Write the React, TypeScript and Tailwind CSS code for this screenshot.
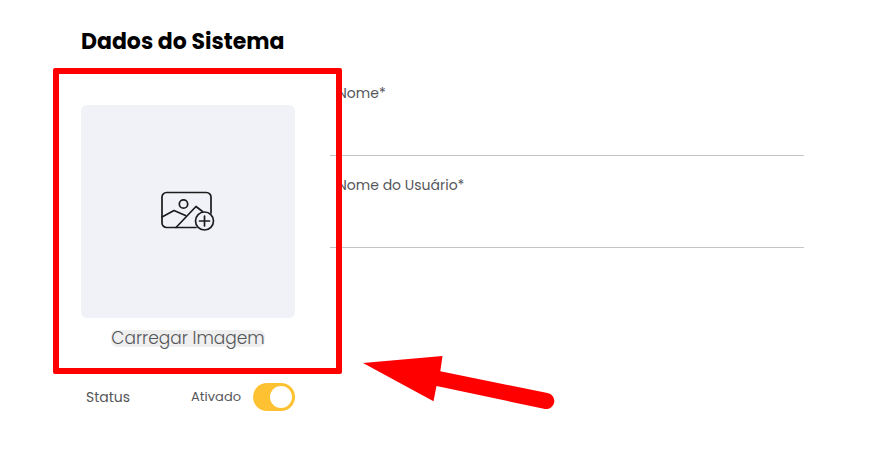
import React, { useState } from 'react';

const fields = [
  { id: 'nome', label: 'Nome*' },
  { id: 'usuario', label: 'Nome do Usuário*' },
];

const ImagePlusIcon: React.FC = () => (
  <svg
    width="54"
    height="41"
    viewBox="0 0 54 41"
    fill="none"
    stroke="#1c1c1e"
    strokeWidth="1.7"
    strokeLinecap="round"
    strokeLinejoin="round"
    aria-hidden="true"
  >
    <path d="M35 36.500H5.500a4.500 4.500 0 0 1-4.500-4.500V6a4.500 4.500 0 0 1 4.500-4.500h40A4.500 4.500 0 0 1 50 6v16" />
    <circle cx="22.500" cy="13" r="4.200" />
    <path d="M1 26l12-6.500 11.500 5" />
    <path d="M15 36.500L35 15.500l6.500 5" />
    <circle cx="43.500" cy="30" r="9" />
    <path d="M43.500 25v10M38.500 30h10" />
  </svg>
);

const Arrow: React.FC = () => (
  <svg
    className="pointer-events-none absolute top-full left-full -mt-4 ml-4"
    width="210"
    height="64"
    viewBox="0 0 210 64"
    fill="#ff0000"
    aria-hidden="true"
  >
    <path d="M11 11L90.500 4L88.300 19.300L195.500 41A8 8 0 0 1 193 57L84.500 34L81.500 49.300Z" />
  </svg>
);

const App: React.FC = () => {
  const [active, setActive] = useState(true);

  return (
    <main className="bg-white pt-[26px] pr-[86px] pb-11 pl-[81px] font-['Poppins','Inter',sans-serif] text-[#55565a]">
      <h1 className="text-[22px] leading-8 font-bold text-black">
        Dados do Sistema
      </h1>
      <form className="mt-[25px] flex gap-[35px]">
        <div className="w-[214px] shrink-0 pt-[22px]">
          <div className="relative flex flex-col items-center">
            <div className="flex h-[213px] w-full items-center justify-center rounded-md bg-[#f1f2f7]">
              <ImagePlusIcon />
            </div>
            <button
              type="button"
              className="mt-3 h-[17px] rounded-md bg-[#efefef] text-[17px] leading-[17px] font-light whitespace-nowrap"
            >
              Carregar Imagem
            </button>
            <div className="pointer-events-none absolute -top-[37px] -right-[47px] -bottom-[27px] -left-[28px] rounded-xs border-6 border-[#ff0000]">
              <Arrow />
            </div>
          </div>
          <div className="mt-9 flex items-center pl-[5px] text-sm leading-5">
            <span>Status</span>
            <label htmlFor="status" className="mr-3 ml-auto text-[13px]">
              Ativado
            </label>
            <input
              id="status"
              type="checkbox"
              role="switch"
              checked={active}
              onChange={(e) => setActive(e.target.checked)}
              className="flex h-7 w-[42px] shrink-0 cursor-pointer appearance-none items-center rounded-full bg-gray-300 px-[3px] before:size-[22px] before:rounded-full before:bg-white checked:justify-end checked:bg-[#fdc132]"
            />
          </div>
        </div>
        <div className="flex min-w-0 flex-1 flex-col gap-[19px]">
          {fields.map((field) => (
            <div key={field.id} className="flex flex-col">
              <label htmlFor={field.id} className="pl-[7px] text-sm leading-5">
                {field.label}
              </label>
              <input
                id={field.id}
                type="text"
                className="h-[53px] w-full border-b border-[#c4c4c4] px-2 outline-none"
              />
            </div>
          ))}
        </div>
      </form>
    </main>
  );
};

export default App;
